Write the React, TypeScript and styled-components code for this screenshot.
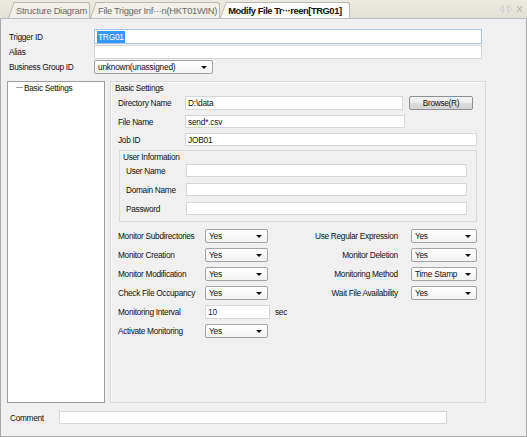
import styled, { createGlobalStyle } from 'styled-components'

const GlobalStyle = createGlobalStyle`
  html, body {
    margin: 0;
    padding: 0;
    background: #f0f0f0;
  }
  body {
    font-family: 'Liberation Sans', Arial, sans-serif;
    font-size: 8px;
    color: #111;
  }
  * {
    box-sizing: border-box;
  }
`

const Window = styled.div`
  width: 527px;
  height: 437px;
  display: flex;
  flex-direction: column;
  overflow: hidden;
`

// tabs
const TabBar = styled.div`
  height: 19px;
  flex: none;
  display: flex;
  align-items: flex-end;
  padding-left: 8px;
  background: linear-gradient(#ebe9e1, #e3e1d7);
  border-bottom: 1px solid #b9bec4;
`

const Tab = styled.div<{ $active?: boolean }>`
  position: relative;
  z-index: ${(p) => (p.$active ? 2 : 1)};
  height: 16px;
  margin-left: 6px;
  padding: 0 ${(p) => (p.$active ? '7px' : '2px')} 0 2px;
  display: flex;
  align-items: center;
  white-space: nowrap;
  font-size: 9.4px;
  letter-spacing: ${(p) => (p.$active ? '-0.45px' : '-0.3px')};
  font-weight: ${(p) => (p.$active ? 700 : 400)};
  color: ${(p) => (p.$active ? '#111' : '#6a6a6a')};
  background: ${(p) => (p.$active ? '#fbfbfb' : '#f1f0eb')};
  border-top: 1px solid #bcbab0;
  border-right: 1px solid #bcbab0;
  border-top-right-radius: 3px;

  &::before {
    content: '';
    position: absolute;
    top: -1px;
    bottom: 0;
    left: -6px;
    width: 10px;
    z-index: -1;
    background: inherit;
    border-left: 1px solid #bcbab0;
    border-top: 1px solid #bcbab0;
    transform: skewX(-20deg);
    transform-origin: bottom left;
  }
`

const TabTools = styled.div`
  margin-left: auto;
  align-self: center;
  display: flex;
  padding-right: 4px;
`

// body
const Body = styled.div`
  flex: 1;
  display: flex;
  flex-direction: column;
  padding: 10px 44px 12px 6px;
  background: #f0f0f0;
  border: 1px solid #a8a8a8;
  border-top: none;
`

const HeaderGrid = styled.div`
  display: grid;
  grid-template-columns: 85px 1fr;
  grid-template-rows: 15px 14px 14px;
  row-gap: 1px;
  padding-left: 2px;
  align-items: center;
`

const Label = styled.span<{ $right?: boolean }>`
  font-size: 8.3px;
  letter-spacing: -0.3px;
  white-space: nowrap;
  text-align: ${(p) => (p.$right ? 'right' : 'left')};
  padding-right: ${(p) => (p.$right ? '13px' : '0')};
`

const TextBox = styled.div<{ $w?: number; $focus?: boolean; $blue?: boolean }>`
  width: ${(p) => (p.$w ? `${p.$w}px` : '100%')};
  height: 100%;
  display: flex;
  align-items: center;
  padding-left: 2px;
  background: #fff;
  border: 1px solid ${(p) => (p.$focus ? '#a9c5e3' : '#d6d6d6')};
  font-size: 8.3px;
  letter-spacing: -0.2px;
  color: ${(p) => (p.$blue ? '#1a1a5a' : '#111')};
  white-space: nowrap;
  overflow: hidden;
`

const Selected = styled.span`
  background: #3399ff;
  color: #fff;
  padding: 1px 1px;
`

const Select = styled.div<{ $w: number }>`
  width: ${(p) => p.$w}px;
  height: 100%;
  display: flex;
  align-items: center;
  justify-content: space-between;
  padding: 0 5px 0 3px;
  background: linear-gradient(#ffffff, #f2f2f2);
  border: 1px solid #a4a4a4;
  border-radius: 2px;
  font-size: 8.3px;
  letter-spacing: -0.2px;
  color: #111;
  white-space: nowrap;

  &::after {
    content: '';
    border-left: 3px solid transparent;
    border-right: 3px solid transparent;
    border-top: 3px solid #111;
  }
`

const Main = styled.div`
  flex: 1;
  display: flex;
  gap: 5px;
  margin: 7px 0 8px;
`

const Tree = styled.div`
  width: 98px;
  flex: none;
  background: #fff;
  border: 1px solid #9e9e9e;
  padding-left: 8px;
`

const TreeItem = styled.div`
  height: 11px;
  display: flex;
  align-items: center;
  gap: 1px;
  font-size: 8.3px;
  letter-spacing: -0.3px;

  &::before {
    content: '';
    width: 7px;
    border-top: 1px solid #a0a0a0;
  }
`

const Group = styled.div`
  flex: 1;
  display: flex;
  flex-direction: column;
  padding: 0 8px 0 7px;
  border: 1px solid #dadada;
  box-shadow: inset 1px 1px 0 #fafafa;
`

const GroupTitle = styled.div`
  height: 11px;
  margin-left: -3px;
  display: flex;
  align-items: center;
  font-size: 8.3px;
  letter-spacing: -0.3px;
`

const FieldGrid = styled.div`
  display: grid;
  grid-template-columns: 67px 1fr;
  grid-template-rows: 14px 13px 13px;
  row-gap: 5px;
  margin-top: 3px;
  align-items: center;
`

const FieldLine = styled.div`
  height: 100%;
  display: flex;
`

const Button = styled.div`
  width: 64px;
  height: 100%;
  margin-left: 6px;
  display: flex;
  align-items: center;
  justify-content: center;
  border: 1px solid #8f9090;
  border-radius: 2px;
  background: linear-gradient(#f4f4f4 0%, #ececec 50%, #dedede 51%, #d2d2d2 100%);
  font-size: 8.3px;
  letter-spacing: -0.3px;
`

const SubGroup = styled.div`
  margin: 4px 0 0 1px;
  padding: 0 9px 6px 6px;
  border: 1px solid #dadada;
`

const SubGrid = styled.div`
  display: grid;
  grid-template-columns: 60px 1fr;
  grid-auto-rows: 13px;
  row-gap: 6px;
  margin-top: 2px;
  align-items: center;
`

const OptionGrid = styled.div`
  display: grid;
  grid-template-columns: 87px 110px 1fr 66px;
  grid-auto-rows: 14px;
  row-gap: 5px;
  margin-top: 7px;
  align-items: center;
`

const Inline = styled.div`
  height: 100%;
  display: flex;
  align-items: center;
  gap: 5px;
`

const CommentRow = styled.div`
  height: 13px;
  display: grid;
  grid-template-columns: 49px 388px;
  align-items: center;
  padding-left: 3px;
`

const options = [
  { left: 'Monitor Subdirectories', right: 'Use Regular Expression', rightValue: 'Yes' },
  { left: 'Monitor Creation', right: 'Monitor Deletion', rightValue: 'Yes' },
  { left: 'Monitor Modification', right: 'Monitoring Method', rightValue: 'Time Stamp' },
  { left: 'Check File Occupancy', right: 'Wait File Availability', rightValue: 'Yes' },
]

const App = () => {
  return (
    <Window>
      <GlobalStyle />
      <TabBar>
        <Tab>Structure Diagram</Tab>
        <Tab>File Trigger Inf···n(HKT01WIN)</Tab>
        <Tab $active>Modify File Tr···reen[TRG01]</Tab>
        <TabTools>
          <svg width="25" height="8" viewBox="0 0 25 8">
            <path d="M5 0.5 L1.5 4 L5 7.5 Z" fill="#ececec" stroke="#c0c0c0" strokeWidth="0.8" />
            <path d="M10 0.5 L13.5 4 L10 7.5 Z" fill="#ececec" stroke="#c0c0c0" strokeWidth="0.8" />
            <path d="M19 1 L24 7 M24 1 L19 7" stroke="#b4b4b4" strokeWidth="1.1" />
          </svg>
        </TabTools>
      </TabBar>

      <Body>
        <HeaderGrid>
          <Label>Trigger ID</Label>
          <TextBox $focus>
            <Selected>TRG01</Selected>
          </TextBox>
          <Label>Alias</Label>
          <TextBox />
          <Label>Business Group ID</Label>
          <Select $w={119}>unknown(unassigned)</Select>
        </HeaderGrid>

        <Main>
          <Tree>
            <TreeItem>Basic Settings</TreeItem>
          </Tree>

          <Group>
            <GroupTitle>Basic Settings</GroupTitle>
            <FieldGrid>
              <Label>Directory Name</Label>
              <FieldLine>
                <TextBox $w={218}>D:\data</TextBox>
                <Button>Browse(R)</Button>
              </FieldLine>
              <Label>File Name</Label>
              <TextBox $w={220}>send*.csv</TextBox>
              <Label>Job ID</Label>
              <TextBox>JOB01</TextBox>
            </FieldGrid>

            <SubGroup>
              <GroupTitle>User Information</GroupTitle>
              <SubGrid>
                <Label>User Name</Label>
                <TextBox />
                <Label>Domain Name</Label>
                <TextBox />
                <Label>Password</Label>
                <TextBox />
              </SubGrid>
            </SubGroup>

            <OptionGrid>
              {options.map((o) => (
                <>
                  <Label key={`${o.left}-l`}>{o.left}</Label>
                  <Select key={`${o.left}-s`} $w={63}>Yes</Select>
                  <Label key={`${o.right}-l`} $right>{o.right}</Label>
                  <Select key={`${o.right}-s`} $w={66}>{o.rightValue}</Select>
                </>
              ))}
              <Label>Monitoring Interval</Label>
              <Inline>
                <TextBox $w={65} $blue>10</TextBox>
                <Label>sec</Label>
              </Inline>
              <span />
              <span />
              <Label>Activate Monitoring</Label>
              <Select $w={63}>Yes</Select>
            </OptionGrid>
          </Group>
        </Main>

        <CommentRow>
          <Label>Comment</Label>
          <TextBox />
        </CommentRow>
      </Body>
    </Window>
  )
}

export default App
